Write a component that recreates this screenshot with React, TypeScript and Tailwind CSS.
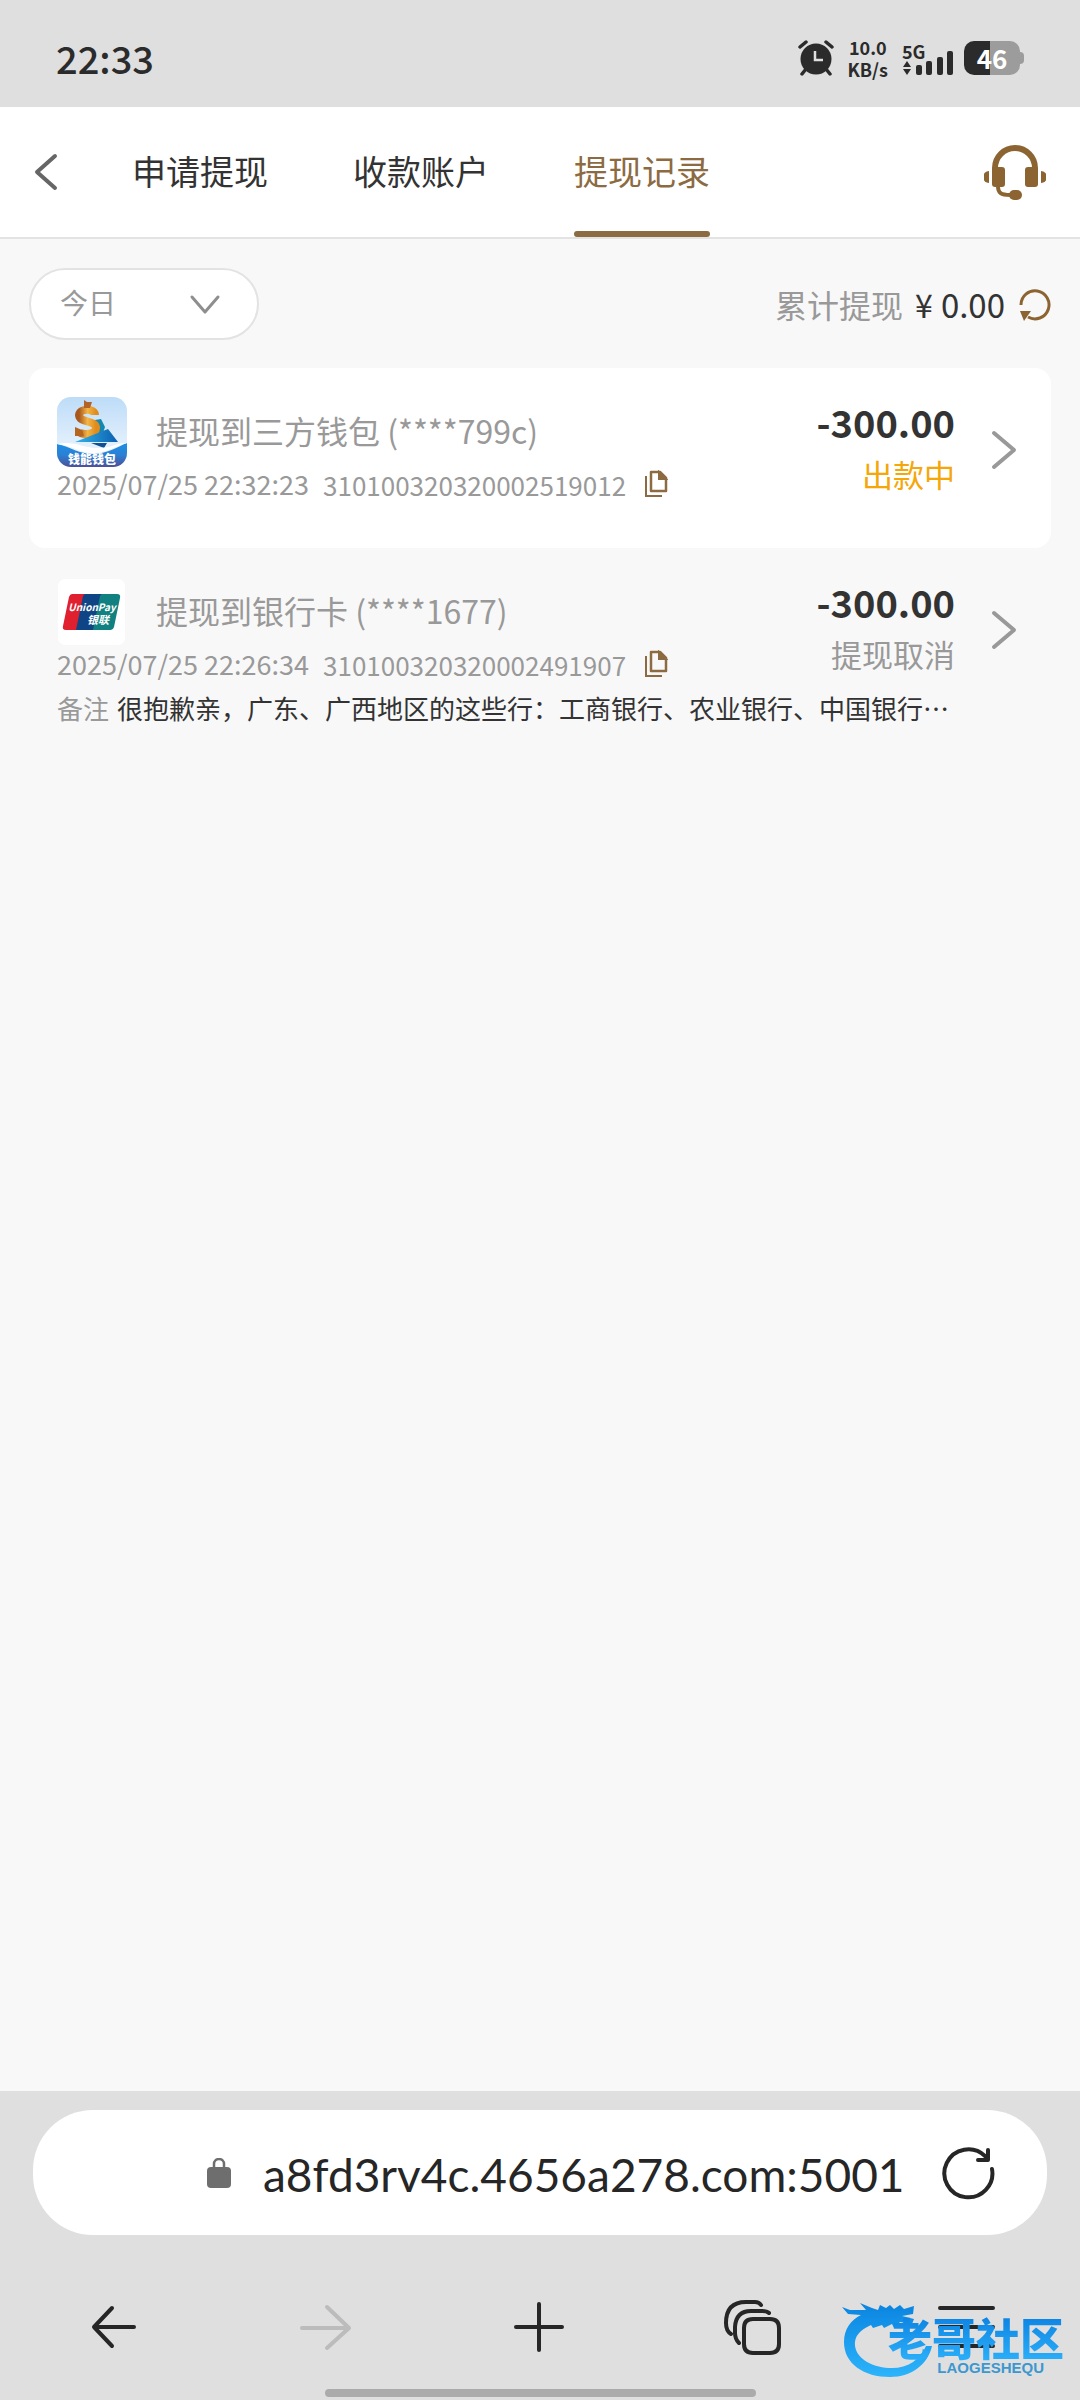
import { useState } from 'react';
import type { ReactNode } from 'react';
import clsx from 'clsx';

type RecordItem = {
  id: string;
  title: string;
  time: string;
  amount: string;
  status: string;
  pending: boolean;
  logo: ReactNode;
  remark?: string;
};

function WalletLogo() {
  return (
    <svg viewBox="0 0 70 70" className="size-[70px]" aria-hidden>
      <defs>
        <linearGradient id="wallet-sky" x1="0" y1="0" x2="0" y2="1">
          <stop offset="0" stopColor="#bddcf8" />
          <stop offset="1" stopColor="#f4f9fe" />
        </linearGradient>
        <linearGradient id="wallet-sea" x1="0" y1="0" x2="0" y2="1">
          <stop offset="0" stopColor="#1c8fe6" />
          <stop offset="0.5" stopColor="#2a80d4" />
          <stop offset="1" stopColor="#4f4f98" />
        </linearGradient>
        <linearGradient id="wallet-gold" x1="0" y1="0" x2="1" y2="0">
          <stop offset="0" stopColor="#a8581c" />
          <stop offset="0.5" stopColor="#f4b544" />
          <stop offset="1" stopColor="#e08c1c" />
        </linearGradient>
        <linearGradient id="wallet-sail" x1="0" y1="0" x2="1" y2="0">
          <stop offset="0" stopColor="#35b3e6" />
          <stop offset="1" stopColor="#0a5fb0" />
        </linearGradient>
        <clipPath id="wallet-clip">
          <rect width="70" height="70" rx="14" />
        </clipPath>
      </defs>
      <g clipPath="url(#wallet-clip)">
        <rect width="70" height="70" fill="url(#wallet-sky)" />
        <path d="M38 23 L44 22 L48 30 L46 36 L38 38 Z" fill="#1488b0" />
        <path
          d="M38 18 C38 11 23 11 22 18 C22 26 39 23 39 31 C39 38 25 38 22 35"
          fill="none"
          stroke="url(#wallet-gold)"
          strokeWidth="8"
        />
        <path d="M18 30 L25 33 L27 39 L18 39 Z" fill="#b5651d" />
        <path d="M27 3 l3 2 5 0 -2 6 h-6 Z" fill="#b5622a" />
        <path d="M18 45 L51 32 L61 45 Z" fill="url(#wallet-sail)" />
        <path d="M34 46 L50 46 L47 51 Z" fill="#0f4f92" />
        <path d="M0 47 C14 50 22 57 36 57 S60 50 70 46 V70 H0 Z" fill="url(#wallet-sea)" />
        <path d="M0 47 C16 43 28 52 43 51 S58 46 70 46 C56 50 48 56 36 56 S16 49 0 47Z" fill="#fff" />
        <text x="35" y="67" textAnchor="middle" fontSize="12" fontWeight="900" fill="#fff">
          钱能钱包
        </text>
      </g>
    </svg>
  );
}

function UnionPayLogo() {
  return (
    <svg viewBox="0 0 70 70" className="size-[70px]" aria-hidden>
      <rect x="1" y="2" width="67" height="66" rx="7" fill="#fff" />
      <path d="M15 17 H32 L25 53 H9 Q5 53 6 49 L12 20 Q13 17 15 17Z" fill="#e0202e" />
      <path d="M28 17 H48 L41 53 H19 L26 19 Q27 17 28 17Z" fill="#0f4585" />
      <path d="M45 17 H60 Q64 17 63 21 L57 50 Q56 53 53 53 H36 L43 19 Q44 17 45 17Z" fill="#108180" />
      <text x="35" y="34" textAnchor="middle" fontSize="10" fontWeight="700" fontStyle="italic" fill="#fff">
        UnionPay
      </text>
      <text x="41" y="47" textAnchor="middle" fontSize="11" fontWeight="700" fontStyle="italic" fill="#fff">
        银联
      </text>
    </svg>
  );
}

function Chevron({ d, className, width = 3 }: { d: string; className?: string; width?: number }) {
  return (
    <svg
      viewBox="0 0 40 40"
      fill="none"
      stroke="currentColor"
      strokeWidth={width}
      strokeLinecap="round"
      strokeLinejoin="round"
      className={clsx('size-10', className)}
      aria-hidden
    >
      <path d={d} />
    </svg>
  );
}

function HeadsetIcon() {
  return (
    <svg viewBox="0 0 62 56" className="h-14 w-[62px]" fill="#8c6432" aria-hidden>
      <path d="M11 28 V24 A20 20 0 0 1 51 24 V28" fill="none" stroke="#8c6432" strokeWidth="6" />
      <rect x="8" y="23" width="13" height="20" rx="3" />
      <rect x="41" y="23" width="13" height="20" rx="3" />
      <path d="M5 27 V39 A6 6 0 0 1 5 27Z" />
      <path d="M57 27 V39 A6 6 0 0 0 57 27Z" />
      <path d="M14 42 C14 49 17 51 26 51" fill="none" stroke="#8c6432" strokeWidth="4" />
      <rect x="25" y="46" width="13" height="10" rx="5" />
    </svg>
  );
}

function CopyIcon() {
  return (
    <svg viewBox="0 0 24 28" className="h-7 w-6" fill="none" stroke="#8c6a42" strokeWidth="2" aria-hidden>
      <path d="M7 2 H16 L22 8 V21 H7 Z" strokeLinejoin="round" strokeWidth="2.5" />
      <path d="M15 2 V9 H22 Z" fill="#8c6a42" />
      <path d="M2 6 V26 H18" />
    </svg>
  );
}

function StatusBar() {
  return (
    <div className="flex h-[107px] items-center justify-between bg-[#dfdfdf] pt-2 pr-14 pl-14 text-[#2b2b2b]">
      <span className="text-[38px] leading-10 font-medium">22:33</span>
      <div className="flex items-center gap-3.5">
        <svg viewBox="0 0 36 36" className="size-9" aria-hidden>
          <circle cx="18" cy="19" r="15.5" fill="#2b2b2b" />
          <path
            d="M2 7 L8 2 M34 7 L28 2 M4 34 L8 29 M32 34 L28 29"
            stroke="#2b2b2b"
            strokeWidth="3.5"
            strokeLinecap="round"
          />
          <path d="M17 11 V20 H25" fill="none" stroke="#dfdfdf" strokeWidth="2.5" />
        </svg>
        <div className="text-center text-[18px] leading-[22px] font-bold">
          <div>10.0</div>
          <div>KB/s</div>
        </div>
        <div className="flex items-end">
          <div className="w-3.5">
            <div className="text-[18px] leading-5 font-bold">5G</div>
            <svg viewBox="0 0 10 14" className="h-3.5 w-2.5" fill="#2b2b2b" aria-hidden>
              <path d="M5 0 L9 6 H1 Z M5 14 L9 8 H1 Z" />
            </svg>
          </div>
          <svg viewBox="0 0 38 24" className="h-6 w-[38px]" fill="#2b2b2b" aria-hidden>
            <rect x="0" y="14" width="6" height="10" rx="2" />
            <rect x="10" y="10" width="6" height="14" rx="2" />
            <rect x="21" y="6" width="6" height="18" rx="2" />
            <rect x="31" y="0" width="6" height="24" rx="2" />
          </svg>
        </div>
        <div className="-ml-1 flex items-center">
          <div className="flex h-[34px] w-14 items-center justify-center rounded-[10px] bg-[linear-gradient(90deg,#2b2b2b_46%,#9c9c9c_46%)] text-[26px] leading-none font-bold text-white">
            46
          </div>
          <div className="h-3 w-1 rounded-r bg-[#9c9c9c]" />
        </div>
      </div>
    </div>
  );
}

const tabs = ['申请提现', '收款账户', '提现记录'];

function Header() {
  const [active, setActive] = useState(2);

  return (
    <header className="flex h-[132px] border-b-2 border-[#e3e3e3] bg-white">
      <button type="button" aria-label="返回" className="w-[132px] pl-[27px] text-[#666]">
        <Chevron d="M28 4 L10 20 L28 36" width={4} />
      </button>
      <nav className="flex flex-1 gap-[85px]">
        {tabs.map((tab, i) => (
          <button
            type="button"
            key={tab}
            onClick={() => setActive(i)}
            className={clsx(
              'flex flex-col text-[34px] leading-[128px]',
              i === active ? 'text-[#8c6a42]' : 'text-[#333]',
            )}
          >
            {tab}
            {i === active && <span className="-mt-1 h-1.5 w-full rounded-full bg-[#8c6a42]" />}
          </button>
        ))}
      </nav>
      <button type="button" aria-label="客服" className="pr-[34px]">
        <HeadsetIcon />
      </button>
    </header>
  );
}

function FilterBar() {
  return (
    <div className="flex items-center justify-between">
      <div className="relative">
        <select
          aria-label="日期"
          className="h-[72px] w-[230px] appearance-none rounded-full border-2 border-[#e3e3e3] bg-white pb-1 pl-[29px] text-[28px] text-[#999]"
        >
          <option>今日</option>
        </select>
        <Chevron
          d="M7 13 L20 28 L33 13"
          className="pointer-events-none absolute top-4 right-[34px] text-[#8e8e8e]"
        />
      </div>
      <div className="flex items-center text-[32px] leading-10">
        <span className="text-[#999]">累计提现</span>
        <span className="ml-3 text-[#333]">¥</span>
        <span className="ml-2 text-[33px] text-[#333]">0.00</span>
        <button type="button" aria-label="刷新" className="ml-3.5">
          <svg viewBox="0 0 32 34" className="h-[34px] w-8" aria-hidden>
            <path d="M2 18 A14 14 0 1 1 9 30" fill="none" stroke="#8c6432" strokeWidth="3" />
            <path d="M1 24 H12 L5 34 Z" fill="#8c6432" />
          </svg>
        </button>
      </div>
    </div>
  );
}

function RecordRow({ record }: { record: RecordItem }) {
  return (
    <li className={clsx('rounded-2xl px-7 pt-7', record.pending ? 'h-[180px] bg-white' : 'pb-6')}>
      <div className="flex">
        <div className="flex-1">
          <div className="flex h-[72px] items-center gap-[29px]">
            {record.logo}
            <span className="pb-1 text-[32px] leading-10 text-[#999]">{record.title}</span>
          </div>
          <div className="flex h-8 items-center text-[26px] text-[#999]">
            <span className="text-[27px]">{record.time}</span>
            <span className="ml-3.5">{record.id}</span>
            <button type="button" aria-label="复制" className="ml-[18px]">
              <CopyIcon />
            </button>
          </div>
        </div>
        <div className="pt-1 text-right">
          <div className="text-[38px] leading-[44px] font-bold text-[#333]">{record.amount}</div>
          <div
            className={clsx('mt-2.5 text-[31px] leading-10', record.pending ? 'text-[#f5a70a]' : 'text-[#999]')}
          >
            {record.status}
          </div>
        </div>
        <button type="button" aria-label="详情" className="ml-7 h-[108px] text-[#999]">
          <Chevron d="M11 3 L31 20 L11 37" width={4} />
        </button>
      </div>
      {record.remark && (
        <p className="mt-1 truncate text-[26px] leading-10 text-[#333]">
          <span className="mr-2 text-[#999]">备注</span>
          {record.remark}
        </p>
      )}
    </li>
  );
}

const records: RecordItem[] = [
  {
    id: '310100320320002519012',
    title: '提现到三方钱包 (****799c)',
    time: '2025/07/25 22:32:23',
    amount: '-300.00',
    status: '出款中',
    pending: true,
    logo: <WalletLogo />,
  },
  {
    id: '310100320320002491907',
    title: '提现到银行卡 (****1677)',
    time: '2025/07/25 22:26:34',
    amount: '-300.00',
    status: '提现取消',
    pending: false,
    logo: <UnionPayLogo />,
    remark: '很抱歉亲，广东、广西地区的这些行：工商银行、农业银行、中国银行…',
  },
];

function AddressBar() {
  return (
    <div className="mx-[33px] flex h-[125px] items-center rounded-[60px] bg-white pr-[52px] pl-[174px]">
      <svg viewBox="0 0 24 30" className="h-[30px] w-6" aria-hidden>
        <path d="M7 12 V6 A5 5 0 0 1 17 6 V12" fill="none" stroke="#6e6e6e" strokeWidth="2.5" />
        <rect y="9" width="24" height="21" rx="4" fill="#6e6e6e" />
      </svg>
      <input
        type="text"
        aria-label="网址"
        defaultValue="a8fd3rv4c.4656a278.com:5001"
        className="ml-8 min-w-0 flex-1 pt-1 font-[Lato] text-[46px] leading-[60px] text-[#262626] outline-none"
      />
      <button type="button" aria-label="重新加载">
        <svg
          viewBox="0 0 54 54"
          className="size-[54px]"
          fill="none"
          stroke="#262626"
          strokeWidth="4"
          strokeLinecap="round"
          aria-hidden
        >
          <path d="M51 23 A24 24 0 1 1 44 10" />
          <path d="M47 4 V14 H37" strokeLinejoin="round" />
        </svg>
      </button>
    </div>
  );
}

const navItems = [
  { label: '后退', color: '#262626', d: 'M52 30 H12 M30 11 L12 30 L30 49' },
  { label: '前进', color: '#bcbcbc', d: 'M7 31 H54 M32 10 L54 31 L32 51' },
  { label: '新建', color: '#262626', d: 'M8 30 H54 M31 7 V53' },
  {
    label: '标签页',
    color: '#262626',
    d: 'M32 22 H49 Q58 22 58 31 V47 Q58 56 49 56 H32 Q23 56 23 47 V31 Q23 22 32 22Z M18 46 Q14 42 14 36 V30 Q15 14 30 14 H41 Q46 14 48 16 M10 37 Q5 34 5 26 Q5 5 25 5 H34 Q38 5 40 8',
  },
  { label: '菜单', color: '#262626', d: 'M6 11 H59 M6 30 H59 M6 49 H59' },
];

function BottomNav() {
  return (
    <nav className="grid grid-cols-5 pr-2.5 pl-1.5">
      {navItems.map((item) => (
        <button type="button" key={item.label} aria-label={item.label} className="flex justify-center">
          <svg
            viewBox="0 0 60 60"
            className="size-[60px] overflow-visible"
            fill="none"
            stroke={item.color}
            strokeWidth="4"
            strokeLinecap="round"
            strokeLinejoin="round"
            aria-hidden
          >
            <path d={item.d} />
          </svg>
        </button>
      ))}
    </nav>
  );
}

function Watermark() {
  return (
    <div className="pointer-events-none absolute right-4 bottom-[22px] h-[78px] w-[222px]">
      <svg viewBox="0 0 222 78" className="absolute inset-0 size-full" aria-hidden>
        <defs>
          <linearGradient id="dragon" x1="0" y1="0" x2="0" y2="1">
            <stop offset="0" stopColor="#0a84e0" />
            <stop offset="1" stopColor="#2cb4fb" />
          </linearGradient>
        </defs>
        <path
          fill="url(#dragon)"
          d="M0 7 L8 10 L24 10 L18 3 L30 8 L36 10 L38 5 L44 8 L48 5 L52 9 L58 5 L62 9 L72 6 L71 14 L60 16 L72 19 L70 24 L58 22 L52 28 L50 24 L42 28 L40 25 L31 28 L29 25 C18 30 12 36 13 46 C15 60 32 68 50 68 C66 68 78 60 84 46 L90 46 C86 64 70 77 48 77 C22 77 2 64 2 42 C2 29 9 20 19 15 L6 14 Z"
        />
      </svg>
      <div className="absolute top-3 right-0 flex flex-col">
        <span className="bg-linear-to-b from-[#0a7fe0] to-[#2cb0fa] bg-clip-text text-[44px] leading-[50px] font-black text-transparent">
          老哥社区
        </span>
        <span className="mr-5 text-right font-['Liberation_Sans'] text-[15px] leading-3 font-bold text-[#3d97cf]">
          LAOGESHEQU
        </span>
      </div>
    </div>
  );
}

export default function App() {
  return (
    <div className="flex min-h-screen flex-col bg-[#f8f8f8] font-['Noto_Sans_CJK_SC',sans-serif]">
      <StatusBar />
      <Header />
      <main className="flex-1 px-[29px] pt-[29px]">
        <FilterBar />
        <ul className="mt-7">
          {records.map((record) => (
            <RecordRow key={record.id} record={record} />
          ))}
        </ul>
      </main>
      <footer className="relative bg-[#dfdfdf] pt-[19px] pb-[3px]">
        <AddressBar />
        <div className="mt-[62px]">
          <BottomNav />
        </div>
        <div className="mx-auto mt-8 h-2 w-[431px] rounded-full bg-[#ababab]" />
        <Watermark />
      </footer>
    </div>
  );
}
